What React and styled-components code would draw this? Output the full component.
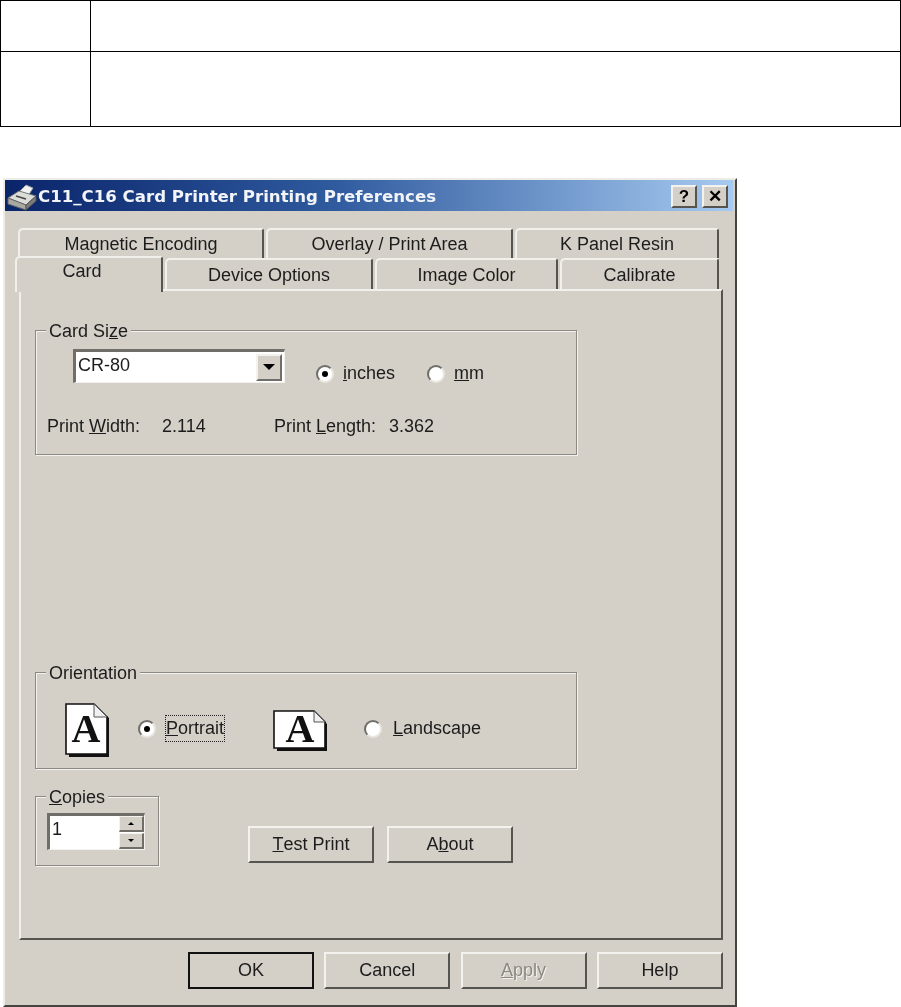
import React from "react";
import styled, { createGlobalStyle } from "styled-components";

const GlobalStyle = createGlobalStyle`
  html, body {
    margin: 0;
    padding: 0;
    background: #fff;
  }
  body {
    width: 901px;
    height: 1007px;
    overflow: hidden;
    font-family: "Liberation Sans", Arial, sans-serif;
  }
  * {
    box-sizing: border-box;
  }
`;

const PrinterIcon = () => (
  <svg width="32" height="28" viewBox="0 0 32 28">
    <path d="M11 11 L20 2 L27 5 L22 13 Z" fill="#f2f2f2" stroke="#9a9a9a" />
    <path d="M2 15 L13 8 L30 13 L20 22 Z" fill="#dcdcd8" stroke="#777" />
    <path d="M2 15 L20 22 V27 L2 21 Z" fill="#a9a9a4" stroke="#666" />
    <path d="M20 22 L30 13 V18 L20 27 Z" fill="#7d7d78" stroke="#555" />
    <path d="M10 13 L20 16" stroke="#444" strokeWidth="1.5" />
  </svg>
);

const PortraitIcon = () => (
  <svg width="46" height="55" viewBox="0 0 46 55">
    <path d="M4 54 H44 V15 L42 13 V51 H4 Z" fill="#111" />
    <path d="M1 1 H29 L42 14 V51 H1 Z" fill="#fff" stroke="#111" strokeWidth="1.6" />
    <path d="M29 1 V14 H42 Z" fill="#f0f0f0" stroke="#555" />
    <text x="21" y="39" textAnchor="middle" fontFamily="Liberation Serif" fontWeight="700" fontSize="40" fill="#111">
      A
    </text>
  </svg>
);

const LandscapeIcon = () => (
  <svg width="55" height="50" viewBox="0 -4 55 50">
    <path d="M4 41 H54 V14 L52 12 V38 H4 Z" fill="#111" />
    <path d="M1 1 H41 L52 12 V38 H1 Z" fill="#fff" stroke="#111" strokeWidth="1.6" />
    <path d="M41 1 V12 H52 Z" fill="#f0f0f0" stroke="#555" />
    <text x="27" y="32" textAnchor="middle" fontFamily="Liberation Serif" fontWeight="700" fontSize="40" fill="#111">
      A
    </text>
  </svg>
);

export default function App() {
  return (
    <>
      <GlobalStyle />
      <TopTable>
        <TableCell $row={51} />
        <TableCell $row={51} />
        <TableCell $row={75} />
        <TableCell $row={75} />
      </TopTable>

      <Dialog>
        <TitleBar>
          <PrinterIcon />
          <TitleText>C11_C16 Card Printer Printing Preferences</TitleText>
          <TitleButtons>
            <TitleButton>?</TitleButton>
            <TitleButton>✕</TitleButton>
          </TitleButtons>
        </TitleBar>

        <BackTabs>
          <Tab $w={246}>Magnetic Encoding</Tab>
          <Tab $w={247}>Overlay / Print Area</Tab>
          <Tab $w={204}>K Panel Resin</Tab>
        </BackTabs>
        <FrontTabs>
          <ActiveTab>Card</ActiveTab>
          <Tab $w={208}>Device Options</Tab>
          <Tab $w={183}>Image Color</Tab>
          <Tab $w={159}>Calibrate</Tab>
        </FrontTabs>

        <Panel>
          <GroupBox $h={125}>
            <GroupLabel>
              Card Si<u>z</u>e
            </GroupLabel>
            <SizeRow>
              <Combo>
                <ComboValue>CR-80</ComboValue>
                <ComboButton>
                  <ArrowDown />
                </ComboButton>
              </Combo>
              <Choice $x={31}>
                <Radio $on />
                <span>
                  <u>i</u>nches
                </span>
              </Choice>
              <Choice $x={32}>
                <Radio />
                <span>
                  <u>m</u>m
                </span>
              </Choice>
            </SizeRow>
            <InfoRow>
              <span>
                Print <u>W</u>idth:
              </span>
              <span>2.114</span>
              <span>
                Print <u>L</u>ength:
              </span>
              <span>3.362</span>
            </InfoRow>
          </GroupBox>

          <OrientationBox>
            <GroupLabel>Orientation</GroupLabel>
            <OrientationRow>
              <IconSlot>
                <PortraitIcon />
              </IconSlot>
              <OrientChoice $x={27}>
                <Radio $on />
                <FocusLabel>
                  <u>P</u>ortrait
                </FocusLabel>
              </OrientChoice>
              <IconSlot $x={49}>
                <LandscapeIcon />
              </IconSlot>
              <OrientChoice $x={36}>
                <Radio />
                <LandscapeLabel>
                  <u>L</u>andscape
                </LandscapeLabel>
              </OrientChoice>
            </OrientationRow>
          </OrientationBox>

          <BottomRow>
            <CopiesBox>
              <GroupLabel>
                <u>C</u>opies
              </GroupLabel>
              <Spinner>
                <SpinValue>1</SpinValue>
                <SpinButtons>
                  <SpinButton>
                    <ArrowUp />
                  </SpinButton>
                  <SpinButton>
                    <ArrowDownSmall />
                  </SpinButton>
                </SpinButtons>
              </Spinner>
            </CopiesBox>
            <PanelButtons>
              <Button>
                <u>T</u>est Print
              </Button>
              <Button>
                A<u>b</u>out
              </Button>
            </PanelButtons>
          </BottomRow>
        </Panel>

        <Footer>
          <Button $default>OK</Button>
          <Button>Cancel</Button>
          <Button $disabled>
            <u>A</u>pply
          </Button>
          <Button>Help</Button>
        </Footer>
      </Dialog>
    </>
  );
}

const TopTable = styled.div`
  display: grid;
  grid-template-columns: 91px 810px;
  width: 901px;
  border-top: 1px solid #000;
`;

const TableCell = styled.div`
  height: ${(p) => p.$row}px;
  border-right: 1px solid #000;
  border-bottom: 1px solid #000;

  &:nth-child(odd) {
    border-left: 1px solid #000;
  }
`;

const Dialog = styled.div`
  margin: 51px 0 0 3px;
  width: 734px;
  height: 829px;
  background: #d4d0c8;
  border-top: 2px solid #eeece6;
  border-left: 2px solid #eeece6;
  border-right: 2px solid #45443f;
  border-bottom: 2px solid #45443f;
  color: #1c1c1c;
  font-size: 18px;
  filter: blur(0.45px);
`;

const TitleBar = styled.div`
  display: flex;
  align-items: center;
  height: 31px;
  margin-right: 2px;
  padding: 2px 3px 0 1px;
  background: linear-gradient(90deg, #0a246a 0%, #2f5a9e 45%, #a6caf0 100%);
`;

const TitleText = styled.div`
  color: #f2f4f8;
  font-family: "DejaVu Sans", sans-serif;
  font-weight: 700;
  font-size: 16.6px;
  white-space: nowrap;
`;

const TitleButtons = styled.div`
  display: flex;
  gap: 5px;
  margin-left: auto;
  padding-right: 2px;
`;

const TitleButton = styled.div`
  display: flex;
  align-items: center;
  justify-content: center;
  width: 26px;
  height: 23px;
  background: #d4d0c8;
  border-top: 2px solid #f4f2ee;
  border-left: 2px solid #f4f2ee;
  border-right: 2px solid #55544f;
  border-bottom: 2px solid #55544f;
  color: #000;
  font-size: 17px;
  font-weight: 700;
`;

const BackTabs = styled.div`
  display: flex;
  gap: 2px;
  height: 30px;
  margin-top: 17px;
  padding-left: 13px;
`;

const FrontTabs = styled.div`
  display: flex;
  align-items: flex-end;
  gap: 2px;
  height: 31px;
  padding-left: 10px;
`;

const Tab = styled.div`
  display: flex;
  align-items: center;
  justify-content: center;
  flex: none;
  width: ${(p) => p.$w}px;
  height: 100%;
  padding-top: 1px;
  background: #d4d0c8;
  border-top: 2px solid #f2f0ea;
  border-left: 2px solid #f2f0ea;
  border-right: 2px solid #55544f;
  border-top-left-radius: 5px;
  border-top-right-radius: 3px;
`;

const ActiveTab = styled.div`
  position: relative;
  z-index: 1;
  flex: none;
  width: 148px;
  height: 36px;
  margin-bottom: -3px;
  padding: 3px 14px 0 0;
  text-align: center;
  background: #d4d0c8;
  border-top: 2px solid #f2f0ea;
  border-left: 2px solid #f2f0ea;
  border-right: 2px solid #55544f;
  border-top-left-radius: 5px;
  border-top-right-radius: 3px;
`;

const Panel = styled.div`
  width: 704px;
  height: 651px;
  margin-left: 14px;
  padding: 39px 0 0 14px;
  border-top: 2px solid #f2f0ea;
  border-left: 2px solid #f2f0ea;
  border-right: 2px solid #55544f;
  border-bottom: 2px solid #55544f;
`;

const GroupBox = styled.div`
  position: relative;
  width: 542px;
  height: ${(p) => p.$h}px;
  border: 1px solid #8b8982;
  box-shadow: 1px 1px 0 #f4f2ee, inset 1px 1px 0 #f4f2ee;
`;

const OrientationBox = styled(GroupBox)`
  height: 97px;
  margin-top: 217px;
`;

const CopiesBox = styled(GroupBox)`
  width: 124px;
  height: 70px;
  flex: none;
`;

const GroupLabel = styled.div`
  position: absolute;
  top: -10px;
  left: 10px;
  padding: 0 3px;
  line-height: 20px;
  background: #d4d0c8;
`;

const SizeRow = styled.div`
  display: flex;
  align-items: flex-start;
  padding: 18px 0 0 37px;
`;

const Combo = styled.div`
  display: flex;
  align-items: center;
  width: 212px;
  height: 34px;
  padding-right: 2px;
  background: #fff;
  border-top: 3px solid #6f6e68;
  border-left: 3px solid #6f6e68;
  border-right: 1px solid #f4f2ee;
  border-bottom: 1px solid #f4f2ee;
`;

const ComboValue = styled.div`
  flex: 1;
  padding: 0 0 3px 2px;
`;

const ComboButton = styled.div`
  display: flex;
  align-items: center;
  justify-content: center;
  width: 26px;
  height: 27px;
  background: #d4d0c8;
  border-top: 2px solid #f4f2ee;
  border-left: 2px solid #f4f2ee;
  border-right: 2px solid #6f6e68;
  border-bottom: 2px solid #6f6e68;
`;

const ArrowDown = styled.div`
  width: 0;
  height: 0;
  border-left: 6px solid transparent;
  border-right: 6px solid transparent;
  border-top: 6px solid #000;
`;

const ArrowDownSmall = styled.div`
  width: 0;
  height: 0;
  border-left: 3px solid transparent;
  border-right: 3px solid transparent;
  border-top: 3px solid #000;
`;

const ArrowUp = styled.div`
  width: 0;
  height: 0;
  border-left: 3px solid transparent;
  border-right: 3px solid transparent;
  border-bottom: 3px solid #000;
`;

const Choice = styled.div`
  display: flex;
  align-items: center;
  gap: 9px;
  margin: 14px 0 0 ${(p) => p.$x}px;
`;

const Radio = styled.div`
  display: flex;
  align-items: center;
  justify-content: center;
  flex: none;
  width: 18px;
  height: 18px;
  background: #fff;
  border-radius: 50%;
  border: 2px solid;
  border-color: #6f6e68 #e8e6e0 #e8e6e0 #6f6e68;

  &::after {
    content: "";
    display: ${(p) => (p.$on ? "block" : "none")};
    width: 6px;
    height: 6px;
    background: #000;
    border-radius: 50%;
  }
`;

const InfoRow = styled.div`
  display: grid;
  grid-template-columns: 115px 112px 115px auto;
  padding: 32px 0 0 11px;
`;

const OrientationRow = styled.div`
  display: flex;
  align-items: center;
  height: 100%;
  padding: 16px 0 0 29px;
`;

const IconSlot = styled.div`
  display: flex;
  margin: 4px 0 0 ${(p) => p.$x || 0}px;
`;

const OrientChoice = styled.div`
  display: flex;
  align-items: center;
  gap: 9px;
  margin-left: ${(p) => p.$x}px;
`;

const FocusLabel = styled.span`
  padding: 2px 0;
  outline: 1px dotted #222;
  margin-left: 1px;
`;

const LandscapeLabel = styled.span`
  margin-left: 2px;
`;

const BottomRow = styled.div`
  display: flex;
  align-items: flex-start;
  margin-top: 27px;
`;

const Spinner = styled.div`
  display: flex;
  width: 98px;
  height: 37px;
  margin: 16px 0 0 11px;
  background: #fff;
  border-top: 3px solid #6f6e68;
  border-left: 3px solid #6f6e68;
  border-right: 1px solid #f4f2ee;
  border-bottom: 1px solid #f4f2ee;
`;

const SpinValue = styled.div`
  flex: 1;
  padding-left: 2px;
  line-height: 26px;
`;

const SpinButtons = styled.div`
  display: flex;
  flex-direction: column;
  gap: 1px;
  width: 25px;
`;

const SpinButton = styled.div`
  display: flex;
  align-items: center;
  justify-content: center;
  height: 16px;
  background: #d4d0c8;
  border-top: 1px solid #f4f2ee;
  border-left: 1px solid #f4f2ee;
  border-right: 2px solid #6f6e68;
  border-bottom: 2px solid #6f6e68;
`;

const PanelButtons = styled.div`
  display: flex;
  gap: 13px;
  margin: 30px 0 0 89px;
`;

const Button = styled.div`
  display: flex;
  align-items: center;
  justify-content: center;
  flex: none;
  width: 126px;
  height: 37px;
  background: #d4d0c8;
  border-top: 2px solid ${(p) => (p.$default ? "#111" : "#f4f2ee")};
  border-left: 2px solid ${(p) => (p.$default ? "#111" : "#f4f2ee")};
  border-right: 2px solid ${(p) => (p.$default ? "#111" : "#55544f")};
  border-bottom: 2px solid ${(p) => (p.$default ? "#111" : "#55544f")};
  color: ${(p) => (p.$disabled ? "#8b8982" : "#1c1c1c")};
  text-shadow: ${(p) => (p.$disabled ? "1px 1px 0 #f4f2ee" : "none")};
`;

const Footer = styled.div`
  display: flex;
  gap: 10.3px;
  margin-top: 12px;
  padding-left: 183px;
`;
